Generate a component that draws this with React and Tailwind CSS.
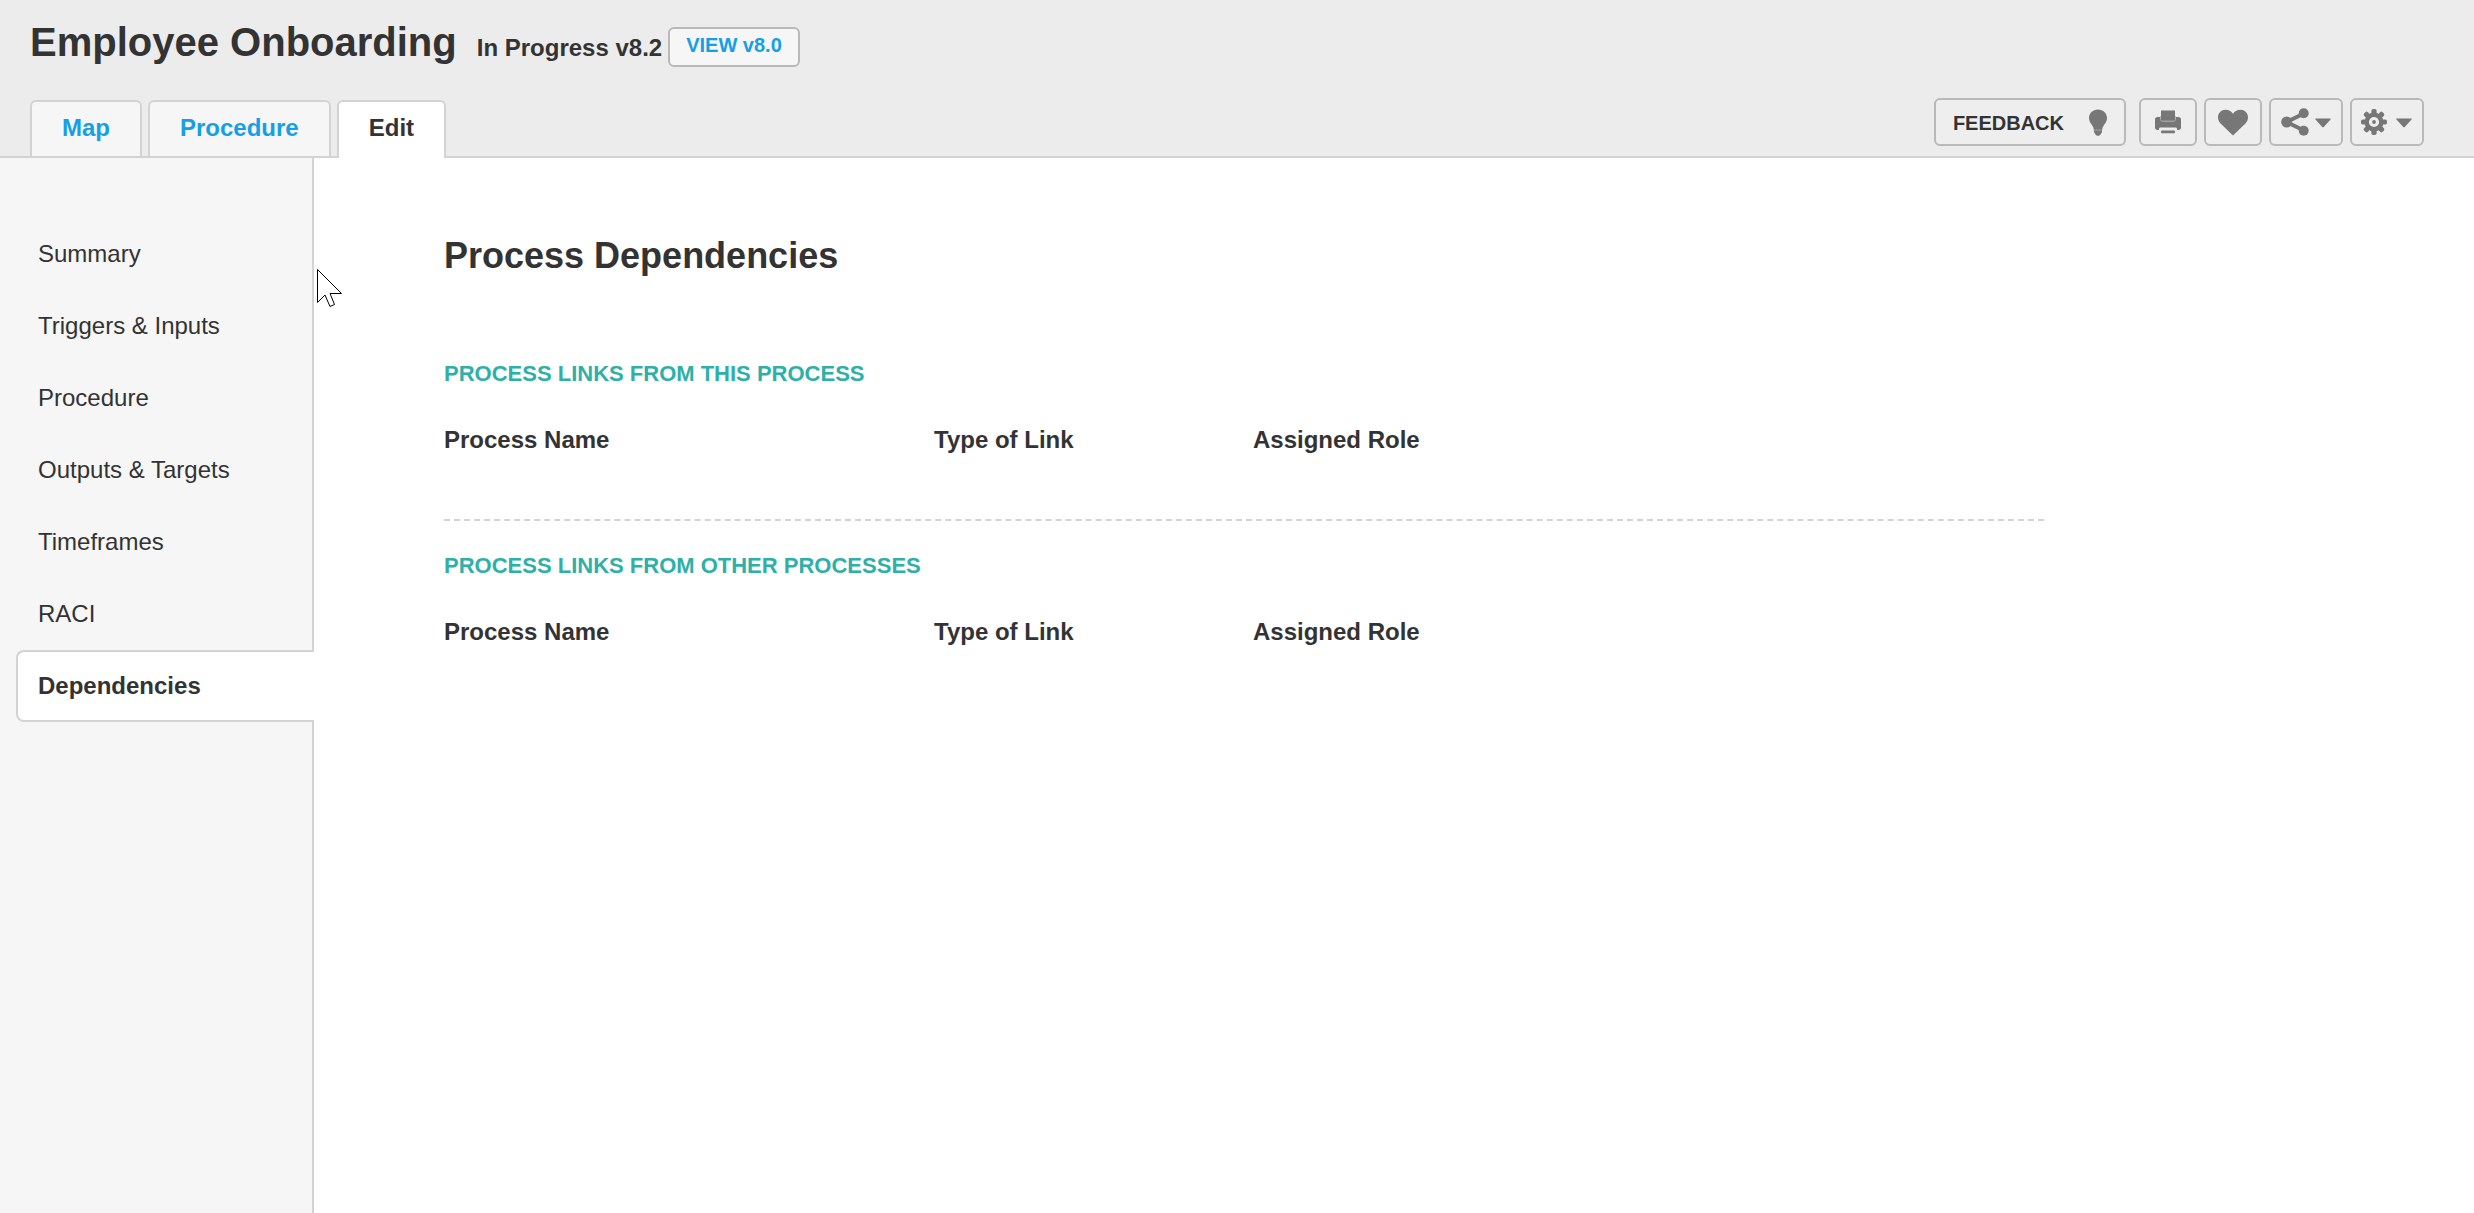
import React from "react";

const tabs = [
  { label: "Map" },
  { label: "Procedure" },
  { label: "Edit", active: true },
];

const sections = [
  "Summary",
  "Triggers & Inputs",
  "Procedure",
  "Outputs & Targets",
  "Timeframes",
  "RACI",
  "Dependencies",
];

const toolButton =
  "flex h-12 items-center rounded-md border-2 border-[#b9b9b9] bg-[#eeeeee]";

function BulbIcon() {
  return (
    <svg viewBox="0 0 20 28" className="h-7 w-5 fill-[#777777]" aria-hidden="true">
      <path d="M10 .5C4.900.5 1 4.200 1 9c0 3 1.400 4.700 2.700 6.600 1.300 1.900 2 3.700 2.200 5.900l.3 2.300 1 .9.600 1.300c.6.900 3.800.9 4.400 0l.6-1.300 1-.9.300-2.300c.2-2.200.9-4 2.200-5.900C17.600 13.700 19 12 19 9 19 4.200 15.100.5 10 .5z" />
      <path d="M6.200 21h7.600" stroke="#a5a5a5" strokeWidth="1" />
    </svg>
  );
}

function PrinterIcon() {
  return (
    <svg viewBox="0 0 28 26" className="h-[26px] w-7 fill-[#777777]" aria-hidden="true">
      <path d="M3.500 8h21C26 8 27 9 27 10.500V18.500c0 1.500-1 2.500-2.500 2.500H23v-1c0-1-.5-1.500-1.500-1.500h-15C5.500 18.500 5 19 5 20v1H3.500C2 21 1 20 1 18.500v-8C1 9 2 8 3.500 8z" />
      <path d="M6.500 7v3.500c0 1 .7 1.700 1.700 1.700h11.600c1 0 1.700-.7 1.700-1.700V7" fill="#777777" stroke="#b5b5b5" strokeWidth="1" />
      <path d="M7 1.500h14V10H7z" />
      <rect x="7" y="21.500" width="14" height="2.800" rx="1" />
    </svg>
  );
}

function HeartIcon() {
  return (
    <svg viewBox="0 0 30 27" className="h-[27px] w-[30px] fill-[#777777]" aria-hidden="true">
      <path d="M15 26.500 2.800 14.800C.9 12.800 0 10.800 0 8.300 0 4 3.300.8 7.500.8c3.100 0 5.900 1.500 7.500 4 1.600-2.500 4.400-4 7.500-4C26.700.8 30 4 30 8.300c0 2.500-.9 4.500-2.800 6.500z" />
    </svg>
  );
}

function ShareIcon() {
  return (
    <svg viewBox="0 0 28 28" className="h-7 w-7" fill="#777777" aria-hidden="true">
      <path d="M23 5.500 5.500 14 23 22.500" fill="none" stroke="#777777" strokeWidth="4" />
      <circle cx="5.700" cy="14" r="5.500" />
      <circle cx="22.700" cy="5.300" r="5" />
      <circle cx="22.700" cy="22.700" r="5" />
    </svg>
  );
}

function GearIcon() {
  return (
    <svg viewBox="0 0 28 28" className="h-7 w-7" fill="#777777" aria-hidden="true">
      {[0, 45, 90, 135, 180, 225, 270, 315].map((angle) => (
        <rect key={angle} x="11.400" y="1" width="5.200" height="6" rx="1.800" transform={`rotate(${angle} 14 14)`} />
      ))}
      <circle cx="14" cy="14" r="7.300" fill="none" stroke="#777777" strokeWidth="4.400" />
      <circle cx="14" cy="14" r="1.900" />
    </svg>
  );
}

function CaretIcon() {
  return (
    <svg viewBox="0 0 16 12" className="h-3 w-4 fill-[#777777]" aria-hidden="true">
      <path d="M.8 2.500h14.400c.5 0 .7.500.3.900L9 10.800c-.6.700-1.400.7-2 0L.5 3.400c-.4-.4-.2-.9.3-.9z" />
    </svg>
  );
}

function LinkTable({ title }) {
  return (
    <section>
      <h2 className="text-[22px] leading-8 font-bold text-[#2eb0a8]">{title}</h2>
      <table className="mt-8 w-full table-fixed text-left text-2xl leading-9" aria-label={title}>
        <thead>
          <tr>
            <th scope="col" className="w-[490px] p-0 font-bold">Process Name</th>
            <th scope="col" className="w-[319px] p-0 font-bold">Type of Link</th>
            <th scope="col" className="p-0 font-bold">Assigned Role</th>
          </tr>
        </thead>
      </table>
    </section>
  );
}

export default function App() {
  return (
    <div className="relative flex min-h-screen flex-col bg-white font-['Liberation_Sans',Arial,sans-serif] text-[#333333]">
      <header className="border-b-2 border-[#d3d3d3] bg-[#ececec] pr-[50px] pl-[30px]">
        <div className="flex h-[98px] items-start pt-4">
          <h1 className="text-[40px] leading-[52px] font-bold">Employee Onboarding</h1>
          <span className="mt-3.5 ml-5 text-2xl leading-9 font-bold">In Progress v8.2</span>
          <button
            type="button"
            className="mt-[11px] ml-1.5 h-10 rounded-md border-2 border-[#b9b9b9] bg-[#f6f6f6] px-4 pb-1 text-xl leading-8 font-bold text-[#149fe6]"
          >
            VIEW v8.0
          </button>
        </div>
        <div className="flex items-start justify-between">
          <nav className="mt-0.5 flex gap-1.5" aria-label="Process views">
            {tabs.map((tab) => (
              <a
                key={tab.label}
                href="#"
                aria-current={tab.active ? "page" : undefined}
                className={
                  "rounded-t-md border-2 border-b-0 border-[#d3d3d3] px-[30px] pt-2 text-2xl leading-9 font-bold " +
                  (tab.active
                    ? "-mb-0.5 bg-white pb-3 text-[#333333]"
                    : "bg-[#f6f6f6] pb-2.5 text-[#149fe6]")
                }
              >
                {tab.label}
              </a>
            ))}
          </nav>
          <div className="flex gap-[7px]">
            <button type="button" className={toolButton + " mr-1.5 gap-6 pt-0.5 pr-4 pl-[17px] text-xl font-bold"}>
              FEEDBACK
              <BulbIcon />
            </button>
            <button type="button" aria-label="Print" className={toolButton + " w-[58px] justify-center"}>
              <PrinterIcon />
            </button>
            <button type="button" aria-label="Favourite" className={toolButton + " w-[58px] justify-center"}>
              <HeartIcon />
            </button>
            <button type="button" aria-label="Share" className={toolButton + " w-[74px] gap-1.5 pl-2.5"}>
              <ShareIcon />
              <CaretIcon />
            </button>
            <button type="button" aria-label="Settings" className={toolButton + " w-[74px] gap-2 pl-2"}>
              <GearIcon />
              <CaretIcon />
            </button>
          </div>
        </div>
      </header>

      <div className="flex flex-1">
        <aside className="w-[314px] shrink-0 border-r-2 border-[#d3d3d3] bg-[#f6f6f6] pt-[60px] pl-4">
          <nav className="flex flex-col" aria-label="Edit sections">
            {sections.map((label) =>
              label === "Dependencies" ? (
                <a
                  key={label}
                  href="#"
                  aria-current="page"
                  className="-mr-0.5 rounded-l-lg border-2 border-r-0 border-[#d3d3d3] bg-white py-4 pl-5 text-2xl leading-9 font-bold"
                >
                  {label}
                </a>
              ) : (
                <a key={label} href="#" className="border-2 border-transparent py-4 pl-5 text-2xl leading-9">
                  {label}
                </a>
              )
            )}
          </nav>
        </aside>

        <main className="flex-1 pt-[71px] pr-8 pl-[130px]">
          <div className="max-w-[1600px]">
            <h2 className="mb-[75px] text-4xl leading-[54px] font-bold">Process Dependencies</h2>
            <LinkTable title="PROCESS LINKS FROM THIS PROCESS" />
            <hr className="mt-[61px] mb-[29px] border-t-2 border-dashed border-[#d3d3d3]" />
            <LinkTable title="PROCESS LINKS FROM OTHER PROCESSES" />
          </div>
        </main>
      </div>

      <svg
        viewBox="0 0 26 39"
        className="pointer-events-none absolute top-[269px] left-[317px] h-[39px] w-[26px]"
        fill="#ffffff"
        stroke="#000000"
        aria-hidden="true"
      >
        <path d="M.5.500v33l7.500-7.500 5 11.500 4.500-2L13 24.500h11.500z" />
      </svg>
    </div>
  );
}
